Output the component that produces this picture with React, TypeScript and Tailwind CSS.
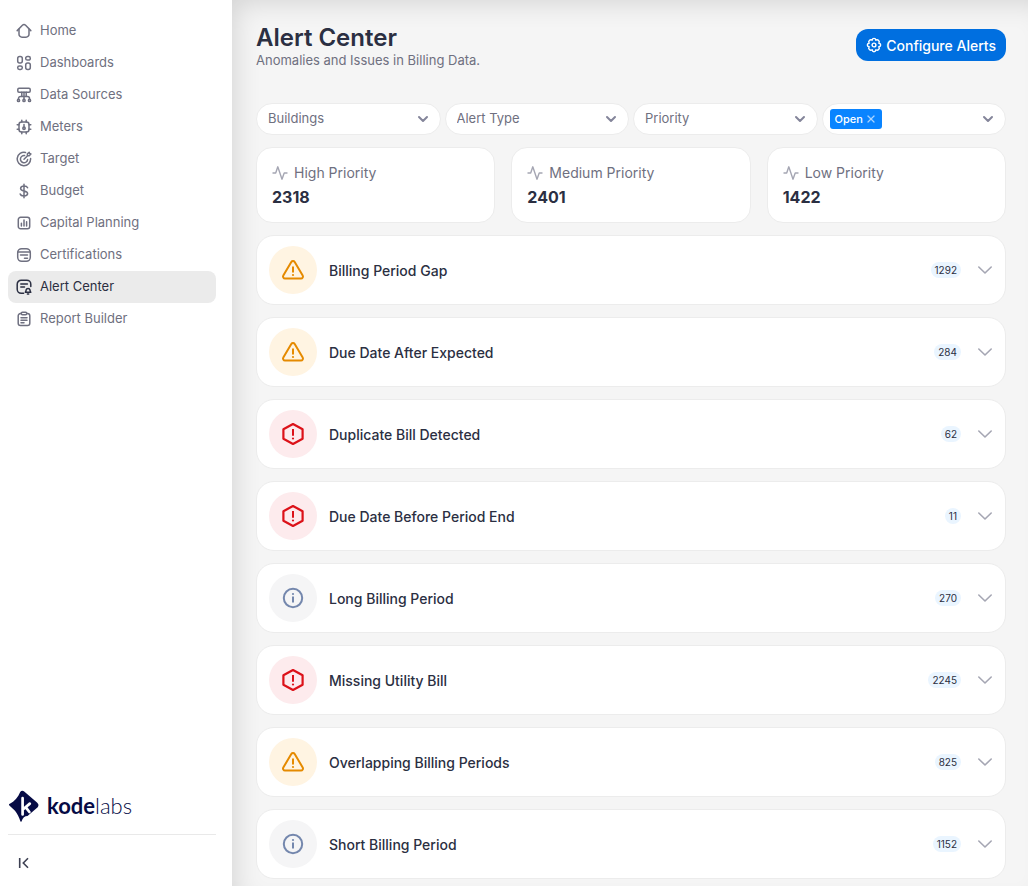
import { useState } from "react";
import type { ReactNode } from "react";
import { ChevronDown, X } from "lucide-react";

type Severity = "warning" | "critical" | "info";

const NAV: { label: string; icon: ReactNode }[] = [
  {
    label: "Home",
    icon: (
      <>
        <path d="M1.2 7.6 6.4 2.3a2.3 2.3 0 0 1 3.2 0l5.2 5.3" />
        <path d="M3 6.2v5a3 3 0 0 0 3 3h4a3 3 0 0 0 3-3v-5" />
      </>
    ),
  },
  {
    label: "Dashboards",
    icon: (
      <>
        <rect x="1.7" y="1.5" width="4.6" height="6.4" rx="2" />
        <rect x="9.7" y="1.5" width="4.6" height="3.6" rx="1.7" />
        <rect x="1.7" y="10.9" width="4.6" height="3.6" rx="1.7" />
        <rect x="9.7" y="8.1" width="4.6" height="6.4" rx="2" />
      </>
    ),
  },
  {
    label: "Data Sources",
    icon: (
      <>
        <rect x="1.8" y="1.2" width="12.4" height="4" rx="1.2" />
        <path d="M8 5.2v7M2.5 12.2v-.7a2 2 0 0 1 2-2h7a2 2 0 0 1 2 2v.7M5.8 5.2v4.3M10.2 5.2v4.3" />
        <circle cx="2.5" cy="13.4" r="1.1" />
        <circle cx="8" cy="13.4" r="1.1" />
        <circle cx="13.5" cy="13.4" r="1.1" />
      </>
    ),
  },
  {
    label: "Meters",
    icon: (
      <>
        <rect x="3" y="3" width="10" height="10" rx="2.5" />
        <path d="M5.8 3V1.2M10.2 3V1.2M5.8 14.8V13M10.2 14.8V13M3 5.8H1.2M3 10.2H1.2M14.8 5.8H13M14.8 10.2H13M8 5.5V9" />
        <circle cx="8" cy="9.3" r="1.2" />
      </>
    ),
  },
  {
    label: "Target",
    icon: (
      <>
        <path d="M9.5 1.5A6.7 6.7 0 1 0 14.6 7.6" />
        <path d="M8.6 4.6a3.6 3.6 0 1 0 3 4M8 8.3l3.6-3.6M11.4 4.8V2.9l1.8-1.7.4 1.3 1.3.4-1.7 1.9z" />
      </>
    ),
  },
  {
    label: "Budget",
    icon: (
      <path d="M8 1.2v13.6M11.6 4.7C11.1 3.5 9.8 3 8 3 6 3 4.6 3.9 4.6 5.4c0 3.4 7 1.7 7 5.2 0 1.5-1.5 2.400-3.600 2.400-2 0-3.400-.7-3.800-2" />
    ),
  },
  {
    label: "Capital Planning",
    icon: (
      <>
        <rect x="2.3" y="2.3" width="11.4" height="11.4" rx="2.3" />
        <path d="M5.4 11V8.2M8 11V5M10.6 11V6.8" />
      </>
    ),
  },
  {
    label: "Certifications",
    icon: (
      <>
        <rect x="1.7" y="1.7" width="12.6" height="12.6" rx="4" />
        <path d="M1.9 5h12.2M4.5 8h7M8.5 11.2h3" />
      </>
    ),
  },
  {
    label: "Alert Center",
    icon: (
      <>
        <path d="M7.6 14.3H5.2a4 4 0 0 1-4-4V5.2a4 4 0 0 1 4-4h5.6a4 4 0 0 1 4 4v2.4M4.8 5h6.6M4.8 8h3.7" />
        <path d="M9.3 13.3c.8-.8.7-1.700.8-2.300a2 2 0 0 1 3.900 0c.1.600 0 1.500.8 2.300zM11.4 15h1.3" />
      </>
    ),
  },
  {
    label: "Report Builder",
    icon: (
      <>
        <path d="M5.2 2.500H4.500a2.300 2.300 0 0 0-2.300 2.300v7.500a2.300 2.300 0 0 0 2.300 2.300h7a2.300 2.300 0 0 0 2.300-2.300V4.800a2.300 2.300 0 0 0-2.300-2.300h-.7" />
        <rect x="5.2" y="1.2" width="5.6" height="2.6" rx="1.2" />
        <path d="M5 6.700h6M5 9.200h6M5 11.700h3" />
      </>
    ),
  },
];

const FILTERS = [
  { id: "buildings", label: "Buildings" },
  { id: "alert-type", label: "Alert Type" },
  { id: "priority", label: "Priority" },
];

const STATS = [
  { label: "High Priority", value: 2318 },
  { label: "Medium Priority", value: 2401 },
  { label: "Low Priority", value: 1422 },
];

const ALERTS: { title: string; count: number; severity: Severity }[] = [
  { title: "Billing Period Gap", count: 1292, severity: "warning" },
  { title: "Due Date After Expected", count: 284, severity: "warning" },
  { title: "Duplicate Bill Detected", count: 62, severity: "critical" },
  { title: "Due Date Before Period End", count: 11, severity: "critical" },
  { title: "Long Billing Period", count: 270, severity: "info" },
  { title: "Missing Utility Bill", count: 2245, severity: "critical" },
  { title: "Overlapping Billing Periods", count: 825, severity: "warning" },
  { title: "Short Billing Period", count: 1152, severity: "info" },
];

export default function App() {
  return (
    <div className="flex min-h-screen bg-white font-['Inter',sans-serif] text-[#2b2f42]">
      <Sidebar />
      <main className="flex-1 min-w-0 bg-[#f5f5f5] pl-6 pr-[22px] pt-6 pb-1 shadow-[inset_12px_12px_28px_-10px_rgba(0,0,0,0.14)]">
        <header className="flex items-start justify-between">
          <div>
            <h1 className="text-2xl leading-7 font-semibold">Alert Center</h1>
            <p className="text-[13px] leading-4 text-[#6f7080]">
              Anomalies and Issues in Billing Data.
            </p>
          </div>
          <button
            type="button"
            className="mt-[5px] h-8 px-[10px] flex items-center gap-1 rounded-xl bg-[#006fe0] text-white text-[14px] font-medium"
          >
            <GearIcon />
            Configure Alerts
          </button>
        </header>

        <div className="mt-[35px] grid grid-cols-4 gap-1">
          {FILTERS.map((f) => (
            <FilterSelect key={f.id} id={f.id} label={f.label} />
          ))}
          <StatusFilter />
        </div>

        <div className="mt-3 grid grid-cols-3 gap-4">
          {STATS.map((s) => (
            <section
              key={s.label}
              className="h-[76px] px-[15px] pt-[13px] rounded-2xl border border-[#ececec] bg-white"
            >
              <h2 className="flex items-center gap-[6px] text-[14px] leading-6 text-[#6f7080]">
                <PulseIcon />
                {s.label}
              </h2>
              <p className="text-[16px] leading-6 font-bold">{s.value}</p>
            </section>
          ))}
        </div>

        <ul className="mt-3 flex flex-col gap-3">
          {ALERTS.map((a) => (
            <li key={a.title}>
              <AlertRow {...a} />
            </li>
          ))}
        </ul>
      </main>
    </div>
  );
}

function Sidebar() {
  return (
    <aside className="sticky top-0 h-screen w-58 shrink-0 flex flex-col justify-between px-2 pt-[15px] pb-[7px]">
      <nav className="mr-2 flex flex-col">
        {NAV.map((item) => {
          const active = item.label === "Alert Center";
          return (
            <a
              key={item.label}
              href="#"
              aria-current={active ? "page" : undefined}
              className={`h-8 px-2 flex items-center gap-2 rounded-lg text-[13px] ${
                active ? "bg-[#ebebeb] text-[#2b2f42]" : "text-[#6f7080] hover:bg-gray-50"
              }`}
            >
              <svg
                viewBox="0 0 16 16"
                className="size-4 fill-none stroke-current"
                strokeWidth="1.5"
                strokeLinecap="round"
                strokeLinejoin="round"
                aria-hidden="true"
              >
                {item.icon}
              </svg>
              {item.label}
            </a>
          );
        })}
      </nav>

      <div className="mr-2">
        <Logo />
        <div className="mt-3 pt-3 border-t border-[#e9e9e9]">
          <button type="button" aria-label="Collapse sidebar" className="size-8 flex items-center justify-center">
            <svg viewBox="0 0 16 16" className="size-4 fill-none stroke-[#3d4052]" strokeWidth="1.6" aria-hidden="true">
              <path d="M3.7 3v10M12 3.300 7.300 8l4.700 4.700" />
            </svg>
          </button>
        </div>
      </div>
    </aside>
  );
}

function Logo() {
  return (
    <a href="#" className="flex items-center gap-[7px] text-[#060b45]">
      <svg viewBox="0 0 32 32" className="size-8" aria-hidden="true">
        <path
          d="M12.2 2.100c1-1.500 2.700-1.600 4-.5l12.800 11c1.700 1.500 2 3.200.7 4.700L19.500 26c-2.800 0-4.800 1.800-5.900 5.200-.3.800-.9.700-1.200 0-1.300-4.200-3.200-7.400-5.400-10.500L1.400 15.600c-.7-.8-.5-1.500.4-1.900 4.700-2 8.300-6.600 10.400-11.600z"
          fill="currentColor"
        />
        <path
          d="M14.6 8.200v16.300M21.800 13.600l-6.600 5.600M18 17.600l3.400 4.400"
          stroke="#fff"
          strokeWidth="2.700"
          strokeLinecap="round"
          fill="none"
        />
      </svg>
      <span className="font-[Lato,sans-serif] text-[22px] leading-8">
        <b className="font-bold">kode</b>
        <span className="font-light">labs</span>
      </span>
    </a>
  );
}

function FilterSelect({ id, label }: { id: string; label: string }) {
  return (
    <div className="grid items-center">
      <select
        id={id}
        aria-label={label}
        className="col-start-1 row-start-1 h-8 w-full appearance-none rounded-2xl border border-[#ececec] bg-white pl-[11px] pr-8 text-[13px] text-[#6f7080]"
      >
        <option>{label}</option>
      </select>
      <ChevronDown
        className="col-start-1 row-start-1 justify-self-end mr-[10px] size-4 text-[#84859a] pointer-events-none"
        strokeWidth={3}
      />
    </div>
  );
}

function StatusFilter() {
  const [selected, setSelected] = useState(["Open"]);

  return (
    <div className="h-8 pl-[7px] pr-[9px] flex items-center justify-between rounded-2xl border border-[#ececec] bg-white">
      <div className="flex gap-1">
        {selected.map((s) => (
          <span
            key={s}
            className="h-5 px-[5px] flex items-center gap-[2px] rounded-[3px] bg-[#0a84ff] text-white text-[11px] font-medium"
          >
            {s}
            <button
              type="button"
              aria-label={`Remove ${s}`}
              onClick={() => setSelected(selected.filter((v) => v !== s))}
            >
              <X className="size-3 text-[#a9d3ff]" strokeWidth={2.5} />
            </button>
          </span>
        ))}
      </div>
      <button type="button" aria-label="Status">
        <ChevronDown className="size-4 text-[#84859a]" strokeWidth={3} />
      </button>
    </div>
  );
}

function AlertRow({ title, count, severity }: { title: string; count: number; severity: Severity }) {
  return (
    <button
      type="button"
      aria-expanded={false}
      className="w-full h-[70px] pl-3 pr-[11px] flex items-center rounded-[18px] border border-[#ececec] bg-white text-left"
    >
      <SeverityIcon severity={severity} />
      <span className="ml-3 flex-1 text-[14px] font-medium">{title}</span>
      <span className="mr-[15px] h-4 px-1 flex items-center rounded-full bg-[#eaf5ff] text-[10px]">
        {count}
      </span>
      <svg
        viewBox="0 0 18 18"
        className="size-[18px] fill-none stroke-[#a5a6b3]"
        strokeWidth="1.6"
        strokeLinecap="round"
        strokeLinejoin="round"
        aria-hidden="true"
      >
        <path d="M2.8 6 9 12l6.2-6" />
      </svg>
    </button>
  );
}

const SEVERITY_STYLES: Record<Severity, string> = {
  warning: "bg-[#fff4e2] text-[#e58a00]",
  critical: "bg-[#fdebed] text-[#dc1219]",
  info: "bg-[#f5f5f6] text-[#7487ad]",
};

function SeverityIcon({ severity }: { severity: Severity }) {
  return (
    <span className={`size-12 shrink-0 flex items-center justify-center rounded-full ${SEVERITY_STYLES[severity]}`}>
      <svg
        viewBox="0 0 24 24"
        className="size-6 fill-none stroke-current"
        strokeWidth="2"
        strokeLinecap="round"
        strokeLinejoin="round"
        aria-hidden="true"
      >
        {severity === "warning" && (
          <>
            <path d="M10.3 4a2 2 0 0 1 3.4 0l8 13.500a2 2 0 0 1-1.700 3H4a2 2 0 0 1-1.700-3z" />
            <path d="M12 8.500v6" strokeLinecap="butt" />
            <circle cx="12" cy="17" r="1.1" className="fill-current stroke-none" />
          </>
        )}
        {severity === "critical" && (
          <>
            <path d="M12 2 21.600 7.200v9.600L12 22 2.400 16.800V7.200z" strokeWidth="2.200" />
            <path d="M12 7v6.800" strokeLinecap="butt" />
            <circle cx="12" cy="16.500" r="1.1" className="fill-current stroke-none" />
          </>
        )}
        {severity === "info" && (
          <>
            <circle cx="12" cy="12" r="9.2" />
            <path d="M12 10.500v6" strokeLinecap="butt" />
            <circle cx="12" cy="8" r="1.1" className="fill-current stroke-none" />
          </>
        )}
      </svg>
    </span>
  );
}

function PulseIcon() {
  return (
    <svg
      viewBox="0 0 16 16"
      className="size-4 fill-none stroke-[#a5a6b3]"
      strokeWidth="1.4"
      strokeLinecap="round"
      strokeLinejoin="round"
      aria-hidden="true"
    >
      <path d="M1 8h2.700L5.800 1.800l4.200 12.400L12.200 8H15" />
    </svg>
  );
}

function GearIcon() {
  return (
    <svg
      viewBox="0 0 16 16"
      className="size-4 fill-none stroke-current"
      strokeWidth="1.4"
      strokeLinecap="round"
      strokeLinejoin="round"
      aria-hidden="true"
    >
      <path d="M6.200 3.200C6.500.7 9.500.7 9.800 3.200 11.800 1.700 14.300 4.200 12.800 6.200 15.300 6.500 15.300 9.500 12.800 9.800 14.300 11.800 11.800 14.300 9.800 12.800 9.500 15.300 6.500 15.300 6.200 12.800 4.200 14.300 1.700 11.800 3.200 9.800.7 9.500.7 6.500 3.200 6.200 1.700 4.200 4.200 1.700 6.200 3.200z" />
      <circle cx="8" cy="8" r="1.900" />
    </svg>
  );
}
